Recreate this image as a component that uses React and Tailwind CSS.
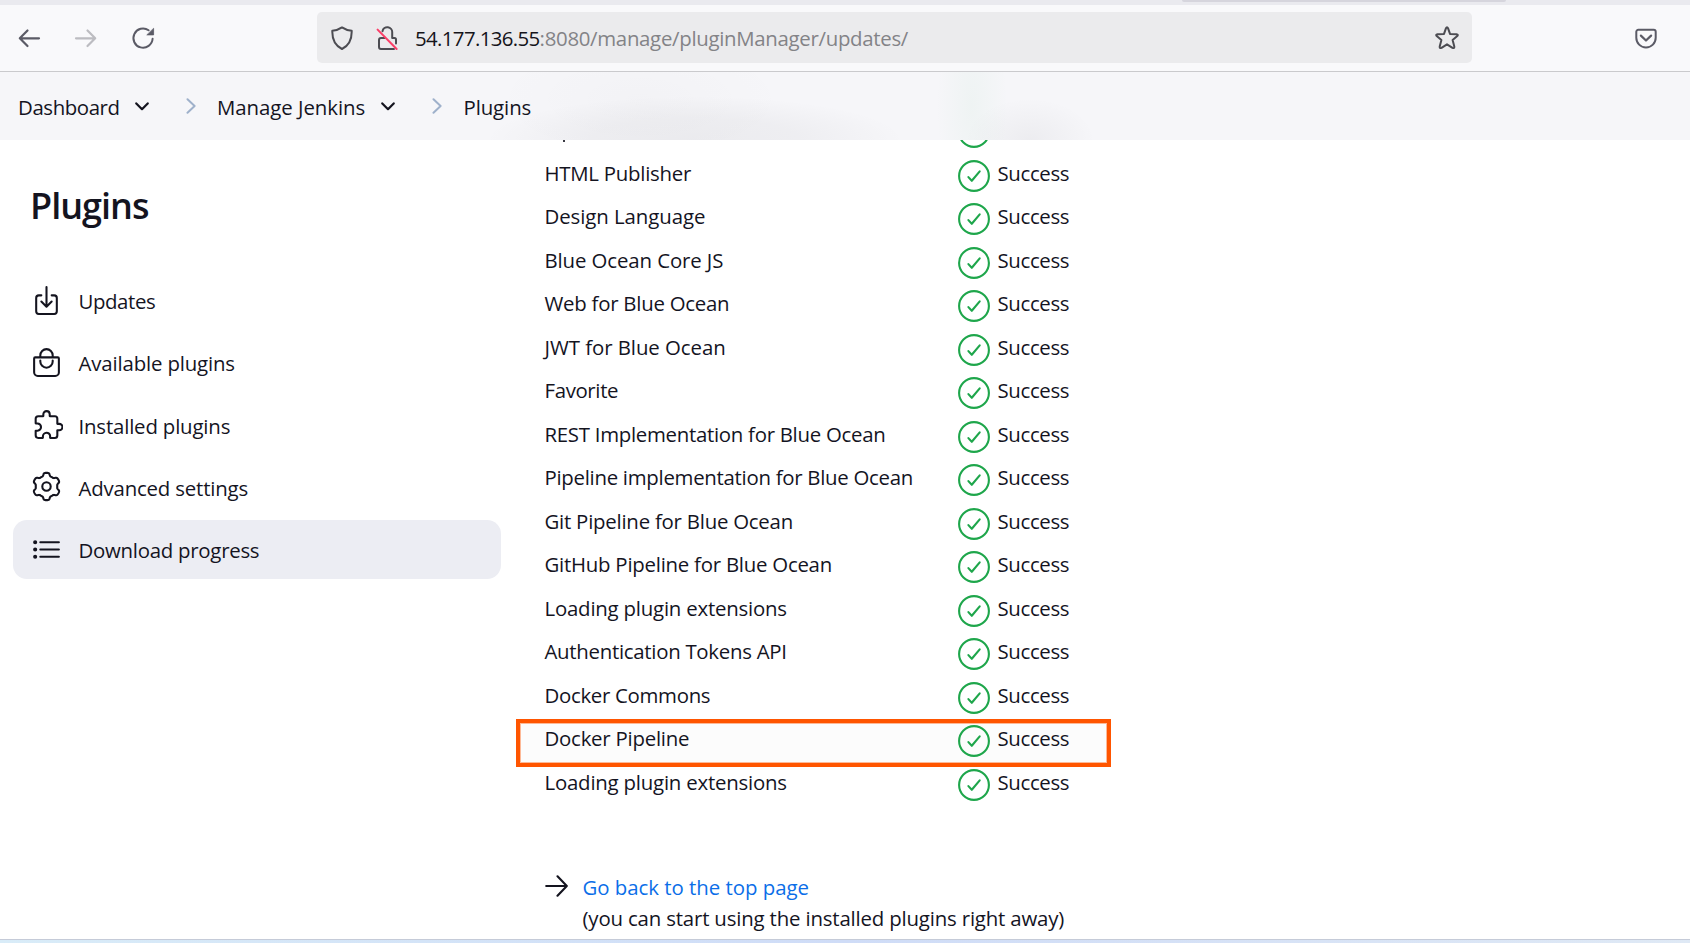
const plugins = [
  { name: 'HTML Publisher', tracking: 'tracking-[-0.25px]' },
  { name: 'Design Language', tracking: 'tracking-[-0.07px]' },
  { name: 'Blue Ocean Core JS', tracking: 'tracking-[-0.1px]' },
  { name: 'Web for Blue Ocean', tracking: 'tracking-[-0.25px]' },
  { name: 'JWT for Blue Ocean', tracking: 'tracking-[-0.05px]' },
  { name: 'Favorite', tracking: 'tracking-[-0.36px]' },
  { name: 'REST Implementation for Blue Ocean', tracking: 'tracking-[-0.28px]' },
  { name: 'Pipeline implementation for Blue Ocean', tracking: 'tracking-[-0.28px]' },
  { name: 'Git Pipeline for Blue Ocean', tracking: 'tracking-[-0.23px]' },
  { name: 'GitHub Pipeline for Blue Ocean', tracking: 'tracking-[-0.24px]' },
  { name: 'Loading plugin extensions', tracking: 'tracking-[-0.21px]' },
  { name: 'Authentication Tokens API', tracking: 'tracking-[-0.28px]' },
  { name: 'Docker Commons', tracking: 'tracking-[-0.3px]' },
  { name: 'Docker Pipeline', tracking: 'tracking-[-0.23px]', highlighted: true },
  { name: 'Loading plugin extensions', tracking: 'tracking-[-0.21px]' },
];

function LineIcon({ viewBox = '0 0 512 512', strokeWidth = 32, children }) {
  return (
    <svg
      className="-mt-px size-[33px] shrink-0"
      viewBox={viewBox}
      fill="none"
      stroke="currentColor"
      strokeWidth={strokeWidth}
      strokeLinecap="round"
      strokeLinejoin="round"
    >
      {children}
    </svg>
  );
}

const DownloadIcon = () => (
  <LineIcon>
    <path d="M336 176h40a40 40 0 0140 40v208a40 40 0 01-40 40H136a40 40 0 01-40-40V216a40 40 0 0140-40h40" />
    <path d="M176 272l80 80 80-80M256 48v288" />
  </LineIcon>
);

const BagIcon = () => (
  <LineIcon>
    <path d="M80 176a16 16 0 00-16 16v216c0 30.24 25.76 56 56 56h272c30.24 0 56-24.51 56-54.75V192a16 16 0 00-16-16zM160 176v-32a96 96 0 0196-96h0a96 96 0 0196 96v32M160 224v16a96 96 0 0096 96h0a96 96 0 0096-96v-16" />
  </LineIcon>
);

const PuzzleIcon = () => (
  <LineIcon viewBox="-40 0 512 512">
    <path d="M413.66 246.1H386a2 2 0 01-2-2v-77.24A38.86 38.86 0 00345.14 128H267.9a2 2 0 01-2-2V98.34c0-27.14-21.5-49.86-48.64-50.33a49.53 49.53 0 00-50.4 49.51V126a2 2 0 01-2 2H87.62A39.74 39.74 0 0048 167.62V238a2 2 0 002 2h26.91c29.37 0 53.68 25.48 54.09 54.85.42 29.87-23.51 57.15-53.29 57.15H50a2 2 0 00-2 2v70.38A39.74 39.74 0 0087.62 464H158a2 2 0 002-2v-20.93c0-30.28 24.75-56.35 55-57.06 30.1-.7 57 20.31 57 50.28V462a2 2 0 002 2h71.14A38.86 38.86 0 00384 425.14v-78a2 2 0 012-2h28.48c27.63 0 49.52-22.67 49.52-50.4s-23.2-48.64-50.34-48.64z" />
  </LineIcon>
);

// Six soft lobes around the centre, the first one pointing straight up.
const gearOutline = Array.from({ length: 180 }, (_, i) => {
  const angle = (i * 2 * Math.PI) / 180;
  const r = 12.2 + 1.5 * Math.tanh(2.2 * Math.cos(6 * angle));
  return `${(16.5 + r * Math.sin(angle)).toFixed(2)},${(16.5 - r * Math.cos(angle)).toFixed(2)}`;
}).join(' ');

const GearIcon = () => (
  <LineIcon viewBox="0 0 33 33" strokeWidth={2.1}>
    <polygon points={gearOutline} />
    <circle cx="16.5" cy="16.5" r="4.2" />
  </LineIcon>
);

const ListIcon = () => (
  <LineIcon>
    <path d="M160 144h288M160 256h288M160 368h288" />
    <circle cx="80" cy="144" r="16" />
    <circle cx="80" cy="256" r="16" />
    <circle cx="80" cy="368" r="16" />
  </LineIcon>
);

const menu = [
  { label: 'Updates', Icon: DownloadIcon, tracking: 'tracking-[-0.4px]' },
  { label: 'Available plugins', Icon: BagIcon, tracking: 'tracking-[-0.15px]' },
  { label: 'Installed plugins', Icon: PuzzleIcon, tracking: 'tracking-[-0.17px]' },
  { label: 'Advanced settings', Icon: GearIcon, tracking: 'tracking-[-0.18px]' },
  { label: 'Download progress', Icon: ListIcon, tracking: 'tracking-[-0.26px]', active: true },
];

function SuccessIcon() {
  return (
    <svg className="size-8 shrink-0" viewBox="0 0 32 32" fill="none" stroke="#1ea64b" strokeWidth="2.1" strokeLinecap="round" strokeLinejoin="round">
      <circle cx="16" cy="16" r="14.9" />
      <path d="M10.4 17.1l3.4 3.7 7.9-9.4" />
    </svg>
  );
}

function Toolbar() {
  return (
    <div className="flex h-[67px] items-center border-b border-[#cacacd] bg-[#f9f9fb]">
      <div className="flex w-[317px] items-center pl-[17px] text-[#5b5b66]">
        <svg className="h-6 w-6" viewBox="0 0 24 24" fill="none" stroke="currentColor" strokeWidth="2.2" strokeLinecap="round" strokeLinejoin="round">
          <path d="M22 12.3H3M10.5 4.5L2.8 12.3l7.7 7.7" />
        </svg>
        <svg className="ml-[33px] h-6 w-6 text-[#bcbcc1]" viewBox="0 0 24 24" fill="none" stroke="currentColor" strokeWidth="2.2" strokeLinecap="round" strokeLinejoin="round">
          <path d="M2 12.3h19M13.5 4.5l7.7 7.8-7.7 7.7" />
        </svg>
        <svg className="ml-[33px] h-6 w-6" viewBox="0 0 24 24" fill="none" stroke="currentColor" strokeWidth="2" strokeLinecap="round">
          <path d="M21.6 12.8A9.6 9.6 0 1 1 17.6 4.3" />
          <path d="M22.6 2.7v6.2h-6.4z" fill="currentColor" stroke="currentColor" strokeWidth="0.8" strokeLinejoin="round" />
        </svg>
      </div>
      <div className="-mt-px flex h-[51px] w-[1155px] items-center rounded-[5px] bg-[#ebebed] pl-[13px] text-[#4c4c52]">
        <svg className="h-6 w-6" viewBox="0 0 24 24" fill="none" stroke="currentColor" strokeWidth="2" strokeLinejoin="round">
          <path d="M12 1.4c2.9 2 6.2 3 9.7 3.4.2 7.400-1.800 14.200-9.700 18.200C4.100 19 2.100 12.200 2.300 4.800 5.800 4.400 9.100 3.400 12 1.400z" />
        </svg>
        <svg className="ml-[21px] h-6 w-6" viewBox="0 0 24 24" fill="none" stroke="currentColor" strokeWidth="2" strokeLinecap="round" strokeLinejoin="round">
          <path d="M7.500 5.200A4.900 4.900 0 0 1 17.200 6.500v5.500h2.300a1.500 1.500 0 0 1 1.500 1.500v4M10 12H6a2 2 0 0 0-2 2v7a2 2 0 0 0 2 2h13" />
          <path d="M2.600 3.600l19 19.400" stroke="#fb3f68" />
        </svg>
        <div className="ml-4 flex h-full items-center font-['Open_Sans',sans-serif] text-[20.4px]">
          <span className="tracking-[-0.62px] text-[#15141a]">54.177.136.55</span>
          <span className="tracking-[-0.3px] text-[#838387]">:8080/manage/pluginManager/updates/</span>
        </div>
        <svg className="mr-[12px] ml-auto h-[26px] w-[26px]" viewBox="0 0 26 26" fill="none" stroke="currentColor" strokeWidth="2" strokeLinejoin="round">
          <path d="M12 3.200Q13 1.200 14 3.200L16 8.900L22.500 9.200Q24.700 9.500 23.300 11.100L18.600 15.100L20.300 21.600Q20.500 23.700 18.500 22.900L13 19.300L7.500 22.900Q5.500 23.700 5.700 21.600L7.400 15.100L2.700 11.100Q1.300 9.500 3.500 9.200L10 8.900Z" />
        </svg>
      </div>
      <svg className="ml-[162px] h-6 w-6 text-[#5b5b66]" viewBox="0 0 24 24" fill="none" stroke="currentColor" strokeWidth="2" strokeLinecap="round" strokeLinejoin="round">
        <path d="M4.300 3.800h15.400a2 2 0 0 1 2 2v6a9.700 9.700 0 0 1-19.400 0v-6a2 2 0 0 1 2-2z" />
        <path d="M6.900 9.600l5.100 4.900 5.100-4.900" strokeWidth="2.200" />
      </svg>
    </div>
  );
}

function CaretDown({ className }) {
  return (
    <svg className={className} viewBox="0 0 14 9" fill="none" stroke="#14141f" strokeWidth="2.200" strokeLinecap="round" strokeLinejoin="round">
      <path d="M1.300 1.400L7 7.200l5.700-5.800" />
    </svg>
  );
}

function Separator({ className }) {
  return (
    <svg className={className} viewBox="0 0 10 16" fill="none" stroke="#9fb1cb" strokeWidth="2" strokeLinecap="round" strokeLinejoin="round">
      <path d="M1.500 1.200L8.600 8l-7.100 6.800" />
    </svg>
  );
}

function Breadcrumbs() {
  return (
    <nav className="flex h-[68px] items-center bg-[#f6f6f9] bg-[radial-gradient(ellipse_210px_44px_at_695px_100%,rgba(20,20,31,0.048),rgba(20,20,31,0.036)_50%,transparent),radial-gradient(ellipse_150px_60px_at_640px_40%,rgba(20,20,31,0.015),transparent),radial-gradient(ellipse_65px_42px_at_1030px_100%,rgba(20,20,31,0.045),transparent),radial-gradient(ellipse_36px_110px_at_972px_50%,rgba(30,166,75,0.035),transparent)] pl-[17px]">
      <span className="w-[103px] pt-[2px] pl-px tracking-[-0.4px]">Dashboard</span>
      <CaretDown className="ml-[15px] h-[9px] w-[14px]" />
      <Separator className="ml-[37px] h-4 w-2.5" />
      <span className="w-[150px] pt-[2px] pl-px tracking-[-0.05px]">
        <span className="ml-5">Manage Jenkins</span>
      </span>
      <CaretDown className="ml-[35px] h-[9px] w-[14px]" />
      <Separator className="ml-[37px] h-4 w-2.5" />
      <span className="ml-[21.5px] pt-[2px] tracking-[-0.1px]">Plugins</span>
    </nav>
  );
}

function Sidebar() {
  return (
    <aside className="w-[544px] shrink-0 pl-[13px]">
      <h1 className="mt-[42px] pl-[17px] text-[36px] leading-[48px] font-semibold tracking-[-1px]">Plugins</h1>
      <ul className="mt-[41px] flex w-[488px] flex-col gap-[3.25px]">
        {menu.map(({ label, Icon, tracking, active }) => (
          <li key={label} className={`flex h-[59px] items-center rounded-[14px] pl-[17px] ${active ? 'bg-[#ecedf3]' : ''}`}>
            <Icon />
            <span className={`ml-[15.5px] pt-px ${tracking}`}>{label}</span>
          </li>
        ))}
      </ul>
    </aside>
  );
}

function PluginRow({ name, tracking, highlighted }) {
  return (
    <li className="relative flex h-[43.5px] items-center">
      {highlighted && (
        <div className="absolute top-[2px] -left-[28px] h-[48px] w-[595px] border-4 border-[#ff5500] bg-[#fcfcfc] shadow-[inset_0_0_0_1px_rgba(255,85,0,0.4)]" />
      )}
      <span className={`relative w-[414px] pb-px pl-[0.5px] ${tracking}`}>{name}</span>
      <span className="relative flex items-center pt-[5px]">
        <SuccessIcon />
      </span>
      <span className="relative ml-[7.5px] pb-px tracking-[-0.35px]">Success</span>
    </li>
  );
}

export default function App() {
  return (
    <div className="flex h-[943px] w-[1690px] flex-col overflow-hidden bg-white font-['Open_Sans',sans-serif] text-[20.4px] leading-[30px] whitespace-nowrap text-[#14141f]">
      <div className="h-[5px] shrink-0 bg-[#eaeaef] pl-[1182px]">
        <div className="h-[2px] w-[324px] rounded-b-full bg-[#d6d5dd]" />
      </div>
      <Toolbar />
      <Breadcrumbs />
      <main className="flex min-h-0 flex-1 overflow-hidden">
        <Sidebar />
        <section>
          <div className="flex h-[11.5px] items-start">
            <div className="ml-[19px] h-[2px] w-[2px] bg-[#3a3a44]" />
            <svg className="ml-[393px] h-[8px] w-8" viewBox="0 24 32 8" fill="none" stroke="#1ea64b" strokeWidth="2.1">
              <circle cx="16" cy="16" r="14.9" />
            </svg>
          </div>
          <ul>
            {plugins.map((plugin, i) => (
              <PluginRow key={i} {...plugin} />
            ))}
          </ul>
          <div className="mt-[67.500px] flex">
            <svg className="mt-[3.500px] h-[22px] w-6" viewBox="0 0 24 22" fill="none" stroke="#14141f" strokeWidth="2.100" strokeLinecap="round" strokeLinejoin="round">
              <path d="M2.200 11h20.300M13.500 1.300L22.800 11l-9.300 9.700" />
            </svg>
            <div className="ml-[14.500px] leading-[31px]">
              <a href="#" className="block tracking-[-0.02px] text-[#0b6ee8]">Go back to the top page</a>
              <p className="tracking-[-0.17px]">(you can start using the installed plugins right away)</p>
            </div>
          </div>
        </section>
      </main>
      <footer className="h-1 shrink-0 border-t border-[#c5cbd8] bg-linear-to-r from-[#d9ecf8] via-[#cfdcf7] to-[#dfe9f5]" />
    </div>
  );
}
